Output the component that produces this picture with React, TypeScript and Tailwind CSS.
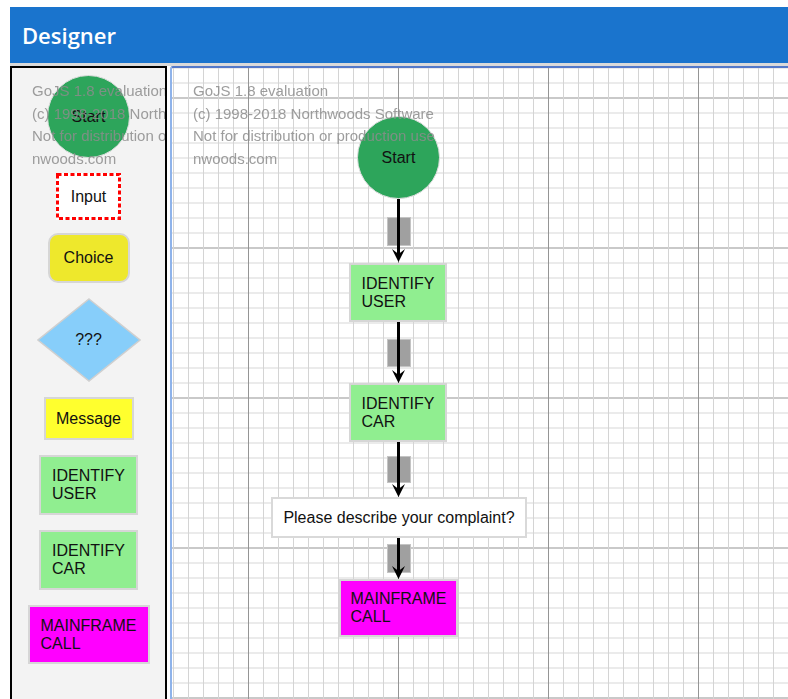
import React from "react";

const font = "font-['Liberation_Sans',Arial,sans-serif]";
const label = `${font} text-[16px] leading-[18px] text-[#111]`;

const W = 618;
const H = 640;

// grid lines in diagram coordinates (origin = diagram top-left)
const vLines = Array.from({ length: 42 }, (_, k) => 3 + 15 * k);
const hLines = Array.from({ length: 43 }, (_, k) => 2 + 15 * k);

const links = [
  { from: 133, to: 196, boxY: 151, boxH: 29 },
  { from: 256, to: 317, boxY: 273, boxH: 28 },
  { from: 376, to: 431, boxY: 390, boxH: 27 },
  { from: 472, to: 513, boxY: 478, boxH: 29 },
];

function Watermark({ className }: { className: string }) {
  return (
    <div
      className={`pointer-events-none absolute whitespace-nowrap ${font} text-[15px] leading-[22.5px] text-[rgba(140,140,140,0.85)] blur-[0.4px] ${className}`}
    >
      <div>GoJS 1.8 evaluation</div>
      <div>(c) 1998-2018 Northwoods Software</div>
      <div>Not for distribution or production use</div>
      <div>nwoods.com</div>
    </div>
  );
}

function StepBox({ lines, className }: { lines: string[]; className: string }) {
  return (
    <div className={`flex items-center justify-center border-2 border-[#d6d6d6] ${className}`}>
      <div className={`${label} text-left`}>
        {lines.map((l) => (
          <div key={l}>{l}</div>
        ))}
      </div>
    </div>
  );
}

function Grid() {
  return (
    <svg className="absolute left-0 top-0" width={W} height={H} shapeRendering="crispEdges">
      {hLines.map((y) => (
        <line key={`h${y}`} x1={0} x2={W} y1={y} y2={y} stroke={(y - 32) % 150 === 0 ? "#c9c9c9" : "#ebebeb"} strokeWidth={2} />
      ))}
      {vLines.map((x) => (
        <line key={`v${x}`} x1={x + 0.5} x2={x + 0.5} y1={0} y2={H} stroke={(x - 78) % 150 === 0 ? "#959595" : "#d4d4d4"} strokeWidth={1} />
      ))}
    </svg>
  );
}

function Links() {
  const cx = 228.5;
  return (
    <svg className="absolute left-0 top-0" width={W} height={H}>
      {links.map((l) => (
        <g key={l.from}>
          <rect x={217.5} y={l.boxY + 0.5} width={23} height={l.boxH - 1} fill="#a0a0a0" stroke="#c4c4c4" />
          <line x1={cx} x2={cx} y1={l.from} y2={l.to - 7} stroke="#000" strokeWidth={3} />
          <path d={`M${cx - 6.5},${l.to - 13} L${cx},${l.to - 8} L${cx + 6.5},${l.to - 13} L${cx},${l.to} Z`} fill="#000" />
        </g>
      ))}
    </svg>
  );
}

function Palette() {
  return (
    <div className="relative h-[640px] w-[157px] shrink-0 overflow-hidden border-2 border-black bg-[#f3f3f3]">
      <div className="flex flex-col items-center gap-[15px] pt-[7px]">
        <div className={`flex h-[83px] w-[83px] items-center justify-center rounded-full border border-[#dcdcdc] bg-[#2da55b] ${label}`}>
          Start
        </div>
        <div className="relative flex h-[47px] w-[65px] items-center justify-center bg-white">
          <svg className="absolute inset-0" width={65} height={47}>
            <rect x={1.5} y={1.5} width={62} height={44} fill="none" stroke="#ff0000" strokeWidth={3} strokeDasharray="4 2.5" />
          </svg>
          <span className={`relative ${label}`}>Input</span>
        </div>
        <div className={`-mt-[2px] flex h-[50px] w-[82px] items-center justify-center rounded-[10px] border-2 border-[#d6d6d6] bg-[#eee82c] ${label}`}>
          Choice
        </div>
        <div className="relative flex h-[84px] w-[104px] items-center justify-center">
          <svg className="absolute inset-0" width={104} height={84}>
            <polygon points="52,1 103,42 52,83 1,42" fill="#87cefa" stroke="#cfcfcf" strokeWidth={1.5} />
          </svg>
          <span className={`relative ${label}`}>???</span>
        </div>
        <div className={`flex h-[43px] w-[90px] items-center justify-center border-2 border-[#d6d6d6] bg-[#ffff2e] ${label}`}>
          Message
        </div>
        <StepBox lines={["IDENTIFY", "USER"]} className="h-[60px] w-[99px] bg-[#90ee90]" />
        <StepBox lines={["IDENTIFY", "CAR"]} className="h-[60px] w-[99px] bg-[#90ee90]" />
        <StepBox lines={["MAINFRAME", "CALL"]} className="h-[59px] w-[122px] bg-[#ff00ff]" />
      </div>
      <Watermark className="left-[20px] top-[12px]" />
    </div>
  );
}

function Diagram() {
  return (
    <div className="relative h-[640px] flex-1 overflow-hidden bg-white">
      <Grid />
      <Links />
      <div className={`absolute left-[187px] top-[50px] flex h-[83px] w-[83px] items-center justify-center rounded-full border border-[#dcdcdc] bg-[#2da55b] ${label}`}>
        Start
      </div>
      <StepBox lines={["IDENTIFY", "USER"]} className="absolute left-[179px] top-[197px] h-[59px] w-[98px] bg-[#90ee90]" />
      <StepBox lines={["IDENTIFY", "CAR"]} className="absolute left-[179px] top-[317px] h-[59px] w-[98px] bg-[#90ee90]" />
      <div className={`absolute left-[101px] top-[431px] flex h-[41px] w-[256px] items-center justify-center border-2 border-[#d9d9d9] bg-white ${label}`}>
        Please describe your complaint?
      </div>
      <StepBox lines={["MAINFRAME", "CALL"]} className="absolute left-[169px] top-[513px] h-[58px] w-[119px] bg-[#ff00ff]" />
      <Watermark className="left-[23px] top-[14px]" />
      <div className="pointer-events-none absolute inset-0 rounded-tl-[3px] border-l-2 border-t-2 border-l-[#8fb3ea] border-t-[#5479c9]" />
    </div>
  );
}

export default function App() {
  return (
    <div className="h-screen overflow-hidden bg-white pl-[10px] pt-[7px]">
      <header className="flex h-[56px] items-center bg-[#1a74cd] pl-3 font-['Open_Sans',sans-serif] text-[22px] font-semibold text-white">
        Designer
      </header>
      <div className="h-[3px] bg-[#dadada]" />
      <div className="flex gap-[3px]">
        <Palette />
        <Diagram />
      </div>
    </div>
  );
}
